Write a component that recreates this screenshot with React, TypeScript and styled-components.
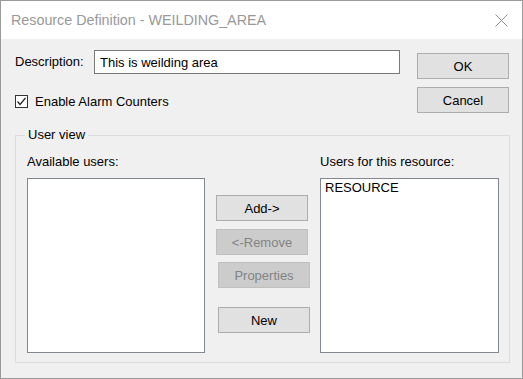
import React from "react";
import styled, { createGlobalStyle } from "styled-components";

const GlobalStyle = createGlobalStyle`
  html, body { margin: 0; padding: 0; background: #ffffff; }
  * { box-sizing: border-box; }
`;

const Window = styled.div`
  width: 523px;
  height: 379px;
  border: 1px solid #9a9a9a;
  display: flex;
  flex-direction: column;
  font-family: "Liberation Sans", Arial, sans-serif;
  font-size: 13px;
  color: #000;
`;

const TitleBar = styled.div`
  height: 38px;
  background: #ffffff;
  display: flex;
  align-items: center;
  justify-content: space-between;
  padding-left: 10px;
  padding-right: 14px;
`;

const Title = styled.span`
  font-family: "Liberation Sans", Arial, sans-serif;
  font-size: 14.3px;
  color: #999999;
`;

const CloseIcon = styled.svg`
  width: 13px;
  height: 13px;
  display: block;
`;

const Body = styled.div`
  flex: 1;
  background: #f0f0f0;
  padding: 11px 13px 0 14px;
  display: flex;
  flex-direction: column;
`;

const TopArea = styled.div`
  display: flex;
  justify-content: space-between;
  height: 63px;
`;

const LeftCol = styled.div`
  display: flex;
  flex-direction: column;
`;

const DescRow = styled.div`
  display: flex;
  align-items: center;
  height: 24px;
`;

const Label = styled.span`
  width: 79px;
  line-height: 16px;
  white-space: nowrap;
`;

const TextInput = styled.div`
  width: 306px;
  height: 24px;
  border: 1px solid #7a7a7a;
  background: #ffffff;
  padding-left: 5px;
  display: flex;
  align-items: center;
  white-space: nowrap;
`;

const CheckRow = styled.div`
  display: flex;
  align-items: center;
  height: 15px;
  margin-top: 20px;
  gap: 7px;
`;

const CheckBox = styled.span`
  width: 13px;
  height: 13px;
  border: 1px solid #333333;
  background: #ffffff;
  display: flex;
  align-items: center;
  justify-content: center;
`;

const RightCol = styled.div`
  display: flex;
  flex-direction: column;
  padding-top: 3px;
  gap: 8px;
`;

const Button = styled.div<{ $disabled?: boolean; $w?: number; $ml?: number; $mt?: number }>`
  width: ${(p) => p.$w ?? 92}px;
  height: 26px;
  margin-left: ${(p) => p.$ml ?? 0}px;
  margin-top: ${(p) => p.$mt ?? 0}px;
  display: flex;
  align-items: center;
  justify-content: center;
  background: ${(p) => (p.$disabled ? "#cccccc" : "#e1e1e1")};
  border: 1px solid ${(p) => (p.$disabled ? "#bfbfbf" : "#adadad")};
  color: ${(p) => (p.$disabled ? "#838383" : "#000000")};
  white-space: nowrap;
`;

const GroupBox = styled.div`
  position: relative;
  margin-top: 22px;
  width: 495px;
  height: 228px;
  border: 1px solid #dcdcdc;
  padding: 18px 10px 0 11px;
`;

const Legend = styled.span`
  position: absolute;
  top: -9px;
  left: 9px;
  padding: 0 3px;
  background: #f0f0f0;
  line-height: 16px;
`;

const GroupGrid = styled.div`
  display: grid;
  grid-template-columns: 178px 115px 179px;
  grid-template-rows: 24px auto;
`;

const ListLabel = styled.span`
  line-height: 16px;
  white-space: nowrap;
`;

const ListBox = styled.div`
  height: 175px;
  border: 1px solid #828790;
  background: #ffffff;
  padding: 1px 4px;
`;

const ListItem = styled.div`
  line-height: 16px;
`;

const MiddleCol = styled.div`
  display: flex;
  flex-direction: column;
  padding-top: 17px;
`;

export default function App() {
  return (
    <>
      <GlobalStyle />
      <Window>
        <TitleBar>
          <Title>Resource Definition - WEILDING_AREA</Title>
          <CloseIcon viewBox="0 0 13 13">
            <line x1="0.5" y1="0.5" x2="12.5" y2="12.5" stroke="#8c8c8c" strokeWidth="1" />
            <line x1="12.5" y1="0.5" x2="0.5" y2="12.5" stroke="#8c8c8c" strokeWidth="1" />
          </CloseIcon>
        </TitleBar>
        <Body>
          <TopArea>
            <LeftCol>
              <DescRow>
                <Label>Description:</Label>
                <TextInput>This is weilding area</TextInput>
              </DescRow>
              <CheckRow>
                <CheckBox>
                  <svg width="11" height="11" viewBox="0 0 11 11">
                    <polyline points="1.5,5.5 4,8.5 9.5,2" fill="none" stroke="#222" strokeWidth="1.2" />
                  </svg>
                </CheckBox>
                <span>Enable Alarm Counters</span>
              </CheckRow>
            </LeftCol>
            <RightCol>
              <Button $w={92}>OK</Button>
              <Button $w={92}>Cancel</Button>
            </RightCol>
          </TopArea>
          <GroupBox>
            <Legend>User view</Legend>
            <GroupGrid>
              <ListLabel>Available users:</ListLabel>
              <span />
              <ListLabel>Users for this resource:</ListLabel>
              <ListBox />
              <MiddleCol>
                <Button $ml={11}>Add-&gt;</Button>
                <Button $ml={11} $mt={8} $disabled>
                  &lt;-Remove
                </Button>
                <Button $ml={13} $mt={7} $disabled>
                  Properties
                </Button>
                <Button $ml={13} $mt={19}>
                  New
                </Button>
              </MiddleCol>
              <ListBox>
                <ListItem>RESOURCE</ListItem>
              </ListBox>
            </GroupGrid>
          </GroupBox>
        </Body>
      </Window>
    </>
  );
}
